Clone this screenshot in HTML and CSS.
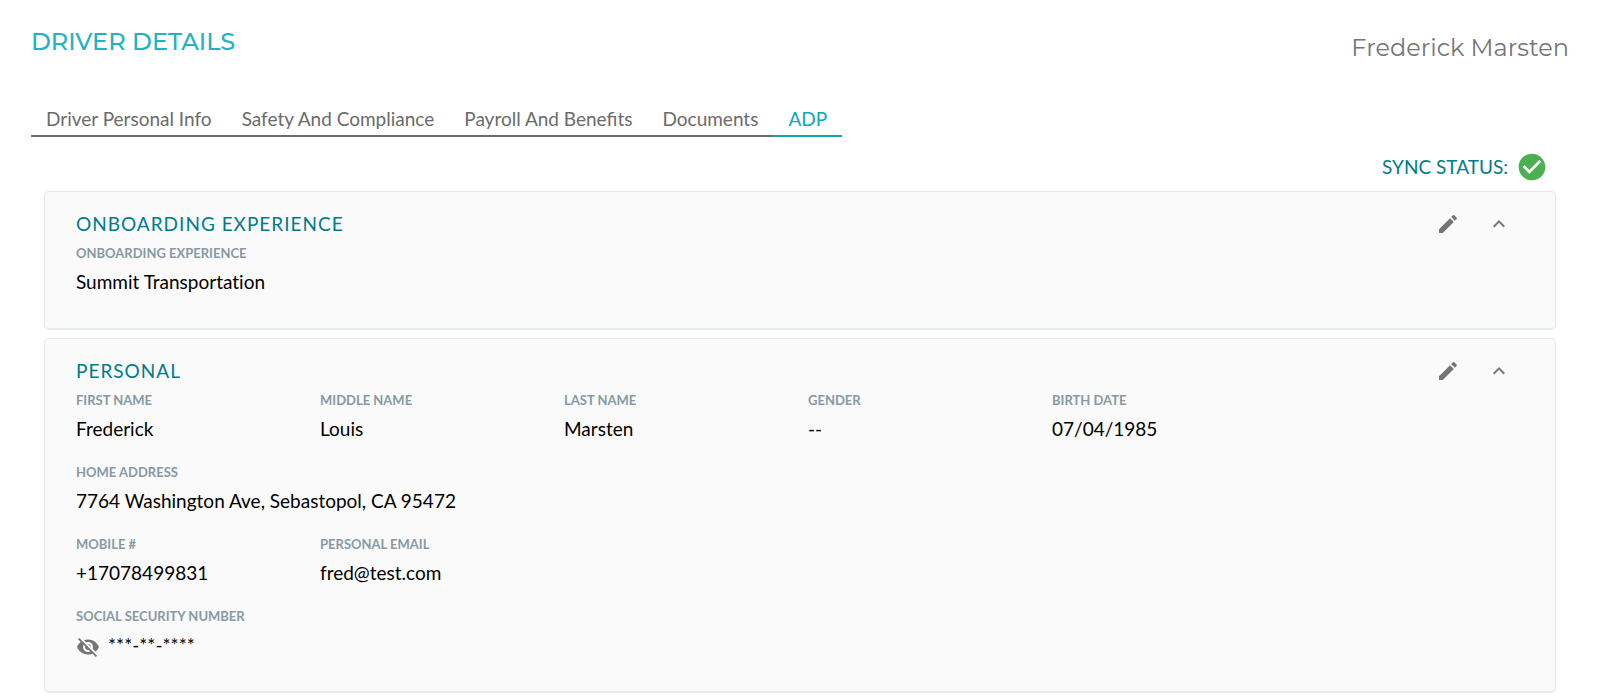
FILE: index.html
```html
<!DOCTYPE html>
<html lang="en">
<head>
  <meta charset="UTF-8">
  <meta name="viewport" content="width=device-width, initial-scale=1">
  <title>Driver Details</title>
  <link rel="stylesheet" href="styles.css">
</head>
<body>
  <header class="page-header">
    <h1>DRIVER DETAILS</h1>
    <div class="driver-name">Frederick Marsten</div>
  </header>

  <nav class="tabs">
    <a href="#personal-info">Driver Personal Info</a>
    <a href="#safety">Safety And Compliance</a>
    <a href="#payroll">Payroll And Benefits</a>
    <a href="#documents">Documents</a>
    <a href="#adp" class="active">ADP</a>
  </nav>

  <main>
    <div class="sync-status">
      <span>SYNC STATUS:</span>
      <svg class="sync-icon" viewBox="0 0 24 24" role="img" aria-label="Synced"><path d="M12 2C6.48 2 2 6.48 2 12s4.48 10 10 10 10-4.48 10-10S17.52 2 12 2zm-2 15l-5-5 1.41-1.41L10 14.17l7.59-7.59L19 8l-9 9z"/></svg>
    </div>

    <section class="card">
      <div class="card-header">
        <h2>ONBOARDING EXPERIENCE</h2>
        <div class="card-actions">
          <button type="button" aria-label="Edit onboarding experience">
            <svg viewBox="0 0 24 24"><path d="M3 17.25V21h3.75L17.81 9.94l-3.75-3.75L3 17.25zM20.71 7.04c.39-.39.39-1.02 0-1.41l-2.34-2.34c-.39-.39-1.02-.39-1.41 0l-1.83 1.83 3.75 3.75 1.83-1.83z"/></svg>
          </button>
          <button type="button" aria-label="Collapse onboarding experience">
            <svg viewBox="0 0 24 24"><path d="M12 8l-6 6 1.41 1.41L12 10.83l4.59 4.58L18 14z"/></svg>
          </button>
        </div>
      </div>
      <dl class="fields">
        <div class="field wide">
          <dt>ONBOARDING EXPERIENCE</dt>
          <dd>Summit Transportation</dd>
        </div>
      </dl>
    </section>

    <section class="card">
      <div class="card-header">
        <h2>PERSONAL</h2>
        <div class="card-actions">
          <button type="button" aria-label="Edit personal">
            <svg viewBox="0 0 24 24"><path d="M3 17.25V21h3.75L17.81 9.94l-3.75-3.75L3 17.25zM20.71 7.04c.39-.39.39-1.02 0-1.41l-2.34-2.34c-.39-.39-1.02-.39-1.41 0l-1.83 1.83 3.75 3.75 1.83-1.83z"/></svg>
          </button>
          <button type="button" aria-label="Collapse personal">
            <svg viewBox="0 0 24 24"><path d="M12 8l-6 6 1.41 1.41L12 10.83l4.59 4.58L18 14z"/></svg>
          </button>
        </div>
      </div>
      <dl class="fields">
        <div class="field">
          <dt>FIRST NAME</dt>
          <dd>Frederick</dd>
        </div>
        <div class="field">
          <dt>MIDDLE NAME</dt>
          <dd>Louis</dd>
        </div>
        <div class="field">
          <dt>LAST NAME</dt>
          <dd>Marsten</dd>
        </div>
        <div class="field">
          <dt>GENDER</dt>
          <dd>--</dd>
        </div>
        <div class="field">
          <dt>BIRTH DATE</dt>
          <dd>07/04/1985</dd>
        </div>
        <div class="field wide">
          <dt>HOME ADDRESS</dt>
          <dd>7764 Washington Ave, Sebastopol, CA 95472</dd>
        </div>
        <div class="field">
          <dt>MOBILE #</dt>
          <dd>+17078499831</dd>
        </div>
        <div class="field">
          <dt>PERSONAL EMAIL</dt>
          <dd>fred@test.com</dd>
        </div>
        <div class="field wide">
          <dt>SOCIAL SECURITY NUMBER</dt>
          <dd class="masked">
            <button type="button" aria-label="Show social security number">
              <svg viewBox="0 0 24 24"><path d="M12 7c2.76 0 5 2.24 5 5 0 .65-.13 1.26-.36 1.83l2.92 2.92c1.51-1.26 2.7-2.89 3.43-4.75-1.73-4.39-6-7.5-11-7.5-1.4 0-2.74.25-3.98.7l2.16 2.16C10.74 7.13 11.35 7 12 7zM2 4.27l2.28 2.28.46.46C3.08 8.3 1.78 10.02 1 12c1.73 4.39 6 7.5 11 7.5 1.55 0 3.03-.3 4.38-.84l.42.42L19.73 22 21 20.73 3.27 3 2 4.27zM7.53 9.8l1.55 1.55c-.05.21-.08.43-.08.65 0 1.66 1.34 3 3 3 .22 0 .44-.03.65-.08l1.55 1.55c-.67.33-1.41.53-2.2.53-2.76 0-5-2.24-5-5 0-.79.2-1.53.53-2.2zm4.31-.78l3.15 3.15.02-.16c0-1.66-1.34-3-3-3l-.17.01z"/></svg>
            </button>
            <span>***-**-****</span>
          </dd>
        </div>
      </dl>
    </section>
  </main>
</body>
</html>
```
FILE: styles.css
```css
* { box-sizing: border-box; }
body { margin: 0; background: #fff; color: #000; font-family: Lato, sans-serif; font-size: 19px; line-height: 26px; }
h1, h2, dl, dd { margin: 0; font-weight: 400; }

.page-header { display: flex; justify-content: space-between; padding: 26px 31px 0; }
h1, .driver-name { font-family: Montserrat, Inter, sans-serif; font-size: 24px; line-height: 32px; }
h1 { color: #22b2c2; font-weight: 500; }
.driver-name { color: #757575; margin-top: 6px; }

.tabs { display: flex; width: fit-content; margin: 42px 31px 0; }
.tabs a { padding: 0 15px 3px; border-bottom: 2px solid #6b6b6b; color: #6b6b6b; text-decoration: none; }
.tabs a.active { color: #12a5b8; border-color: #12a5b8; }

main { padding: 14px 44px 6px; }
.sync-status { display: flex; justify-content: flex-end; align-items: center; gap: 8px; padding-right: 8px; margin-bottom: 8px; color: #007c89; }
.sync-icon { width: 32px; height: 32px; fill: #4caf50; }

.card { background: #fafafa; border: 1px solid #e3e9e9; border-bottom: 2px solid #e8ebeb; border-radius: 5px; padding: 19px 15px 33px 31px; margin-bottom: 8px; }
.card-header { display: flex; justify-content: space-between; align-items: center; margin-bottom: 6px; }
h2 { color: #007c89; font-size: 19px; letter-spacing: 1px; }
.card-actions { display: flex; gap: 27px; padding-right: 29px; }
button { width: 24px; height: 24px; padding: 0; border: 0; background: none; cursor: pointer; }
button svg { display: block; width: 24px; height: 24px; fill: #757575; }

.fields { display: grid; grid-template-columns: repeat(6, 1fr); row-gap: 20px; }
.field.wide { grid-column: 1 / -1; }
dt { color: #8799a3; font-size: 13px; font-weight: 700; line-height: 20px; margin-bottom: 6px; }
dd { font-variant-ligatures: none; }
.masked { display: flex; align-items: flex-start; gap: 8px; height: 26px; }
.masked button { margin-top: 3px; }
```
